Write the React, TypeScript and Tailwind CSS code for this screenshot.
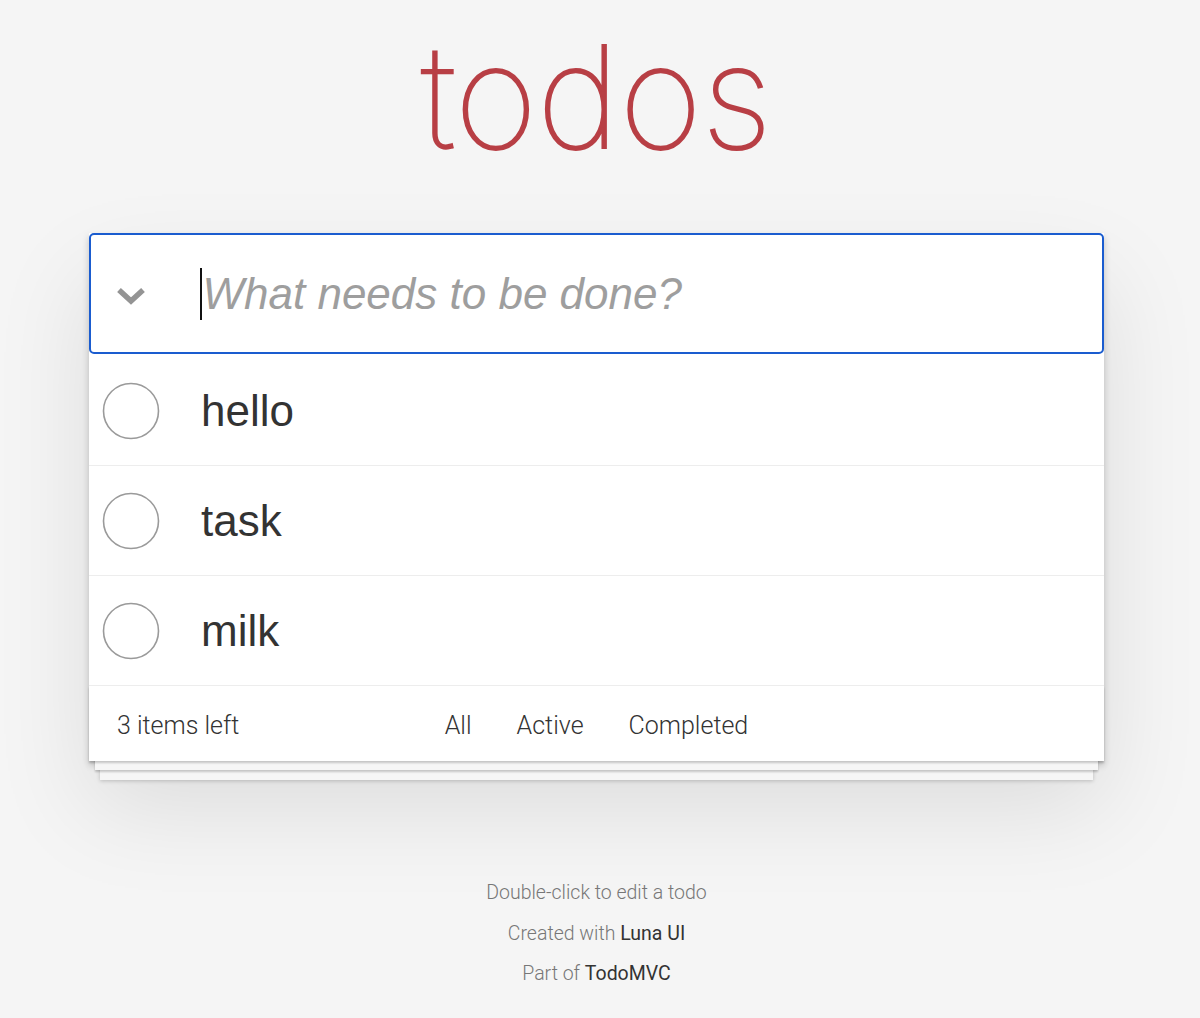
const todos = ["hello", "task", "milk"];

const filters = ["All", "Active", "Completed"];

function Chevron() {
  return (
    <svg width="30" height="20" viewBox="0 0 30 20" fill="none">
      <path d="M3 4 L15 15 L27 4" stroke="#949494" strokeWidth="5.5" strokeLinejoin="miter" />
    </svg>
  );
}

function Circle() {
  return (
    <svg width="58" height="58" viewBox="0 0 58 58" fill="none">
      <circle cx="29" cy="29" r="27.5" stroke="#9a9a9a" strokeWidth="1.6" />
    </svg>
  );
}

export default function App() {
  return (
    <div className="min-h-screen bg-[#f5f5f5] pb-10">
      <div className="ml-[89px] w-[1015px]">
        <h1 className="pt-[22px] text-center font-['Inter',sans-serif] text-[142px] font-thin leading-[148px] text-[#b83f45] [-webkit-text-stroke:2.2px_#b83f45]">
          todos
        </h1>

        <section className="mt-[63px] bg-white shadow-[0_4px_7px_0_rgba(0,0,0,0.2),0_46px_92px_0_rgba(0,0,0,0.1)]">
          <header className="flex h-[121px] items-center rounded-[5px] border-2 border-[#1a5ccf] bg-white">
            <div className="flex w-[109px] items-center pl-[25px] pt-[4px]">
              <Chevron />
            </div>
            <span className="h-[52px] w-[1.5px] bg-[#111]" />
            <span className="ml-[1px] font-['Liberation_Sans',Arial,sans-serif] text-[44px] italic text-[#9e9e9e]">
              What needs to be done?
            </span>
          </header>

          <ul className="pt-[2px]">
            {todos.map((t) => (
              <li key={t} className="flex h-[110px] items-center border-b border-[#ededed]">
                <div className="ml-[13px]">
                  <Circle />
                </div>
                <span className="ml-[41px] font-['Liberation_Sans',Arial,sans-serif] text-[44px] text-[#333]">
                  {t}
                </span>
              </li>
            ))}
          </ul>

          <footer className="grid h-[75px] grid-cols-[1fr_auto_1fr] items-center px-[28px] pt-[4px] font-['Roboto',sans-serif] text-[25px] font-light text-[#333] shadow-[0_2px_2px_rgba(0,0,0,0.2),0_15px_0_-6px_#f6f6f6,0_17px_2px_-6px_rgba(0,0,0,0.2),0_30px_0_-11px_#f6f6f6,0_31px_4px_-11px_rgba(0,0,0,0.2)]">
            <span>3 items left</span>
            <div className="flex gap-[45px]">
              {filters.map((f) => (
                <span key={f}>{f}</span>
              ))}
            </div>
            <span />
          </footer>
        </section>

        <div className="mt-[112px] text-center font-['Roboto',sans-serif] text-[19.5px] font-light leading-[40.5px] text-[#777]">
          <p>Double-click to edit a todo</p>
          <p>
            Created with <span className="font-normal text-[#333]">Luna UI</span>
          </p>
          <p>
            Part of <span className="font-normal text-[#333]">TodoMVC</span>
          </p>
        </div>
      </div>
    </div>
  );
}
